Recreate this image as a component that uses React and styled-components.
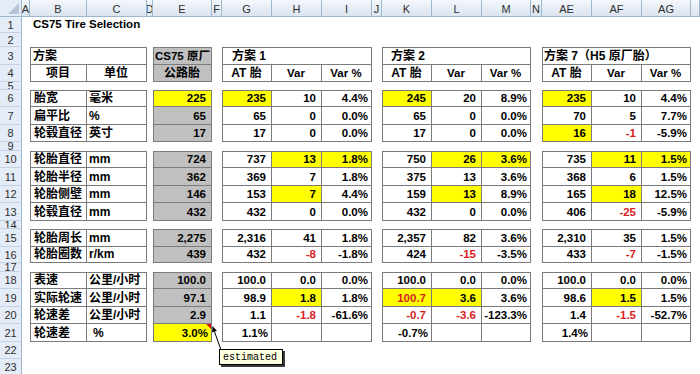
import React from "react";
import styled, { createGlobalStyle, css } from "styled-components";

const GlobalStyle = createGlobalStyle`
  html, body {
    margin: 0;
    padding: 0;
    background: #fff;
    overflow: hidden;
  }
  body {
    font-family: "Liberation Sans", "Noto Sans CJK SC", sans-serif;
  }
`;

// column widths: row header, A .. AG
const COLS = [22, 8, 57, 60, 6, 59, 10, 50, 50, 50, 10, 50, 50, 49, 11, 50, 50, 49];
const LETTERS = ["A", "B", "C", "D", "E", "F", "G", "H", "I", "J", "K", "L", "M", "N", "AE", "AF", "AG", ""];
// sheet rows 1..23
const HEIGHTS = [16, 14, 18, 17, 8, 17, 18, 17, 9, 17, 18, 17, 18, 8, 18, 16, 9, 17, 18, 17, 18, 17, 17];

const LINE = "1px solid #7b7b7b";
const GRAY = "#c0c0c0";
const YELLOW = "#ffff00";

const Sheet = styled.div`
  position: relative;
  display: grid;
  grid-template-columns: ${COLS.map((w) => w + "px").join(" ")} 1fr;
  grid-template-rows: 17px ${HEIGHTS.map((h) => h + "px").join(" ")};
  width: 700px;
  height: 374px;
  overflow: hidden;
`;

const Corner = styled.div`
  grid-row: 1;
  grid-column: 1;
  position: relative;
  background: #e4ecf7;
  border-right: 1px solid #9eb6ce;
  border-bottom: 1px solid #9eb6ce;

  &::after {
    content: "";
    position: absolute;
    right: 2px;
    bottom: 2px;
    border-bottom: 11px solid #b4c4d8;
    border-left: 11px solid transparent;
  }
`;

const ColHead = styled.div`
  grid-row: 1;
  grid-column: ${(p) => p.$col};
  box-sizing: border-box;
  padding-top: 2px;
  background: linear-gradient(#f4f7fb, #dbe4f0);
  border-right: 1px solid #9eb6ce;
  border-bottom: 1px solid #9eb6ce;
  display: flex;
  align-items: center;
  justify-content: center;
  font-size: 11px;
  color: #2e2e2e;
  overflow: hidden;
  white-space: nowrap;
`;

const RowHead = styled.div`
  grid-column: 1;
  grid-row: ${(p) => p.$row};
  box-sizing: border-box;
  background: #e4ecf7;
  border-right: 1px solid #9eb6ce;
  border-bottom: 1px solid #c3d2e4;
  display: flex;
  align-items: center;
  justify-content: center;
  font-size: 11px;
  color: #2e2e2e;
  overflow: hidden;
`;

const Title = styled.div`
  grid-row: 2;
  grid-column: 3 / span 4;
  display: flex;
  align-items: flex-end;
  padding: 0 0 2px 3px;
  font-size: 11.5px;
  font-weight: 700;
  line-height: 14px;
  white-space: nowrap;
`;

const Cell = styled.div`
  grid-row: ${(p) => p.$row};
  grid-column: ${(p) => p.$col} / span ${(p) => p.$span || 1};
  position: relative;
  box-sizing: border-box;
  display: flex;
  align-items: flex-end;
  justify-content: ${(p) =>
    p.$align === "left" ? "flex-start" : p.$align === "center" ? "center" : "flex-end"};
  padding: 0 ${(p) => p.$pr ?? 3}px 1px ${(p) => p.$pl ?? 2}px;
  border-right: ${LINE};
  border-bottom: ${LINE};
  border-top: ${(p) => (p.$top ? LINE : "none")};
  border-left: ${(p) => (p.$left ? LINE : "none")};
  background: ${(p) => p.$bg || "transparent"};
  color: ${(p) => (p.$red ? "#d81e1e" : "#000")};
  font-size: ${(p) => (p.$zh ? 12 : 11.5)}px;
  font-weight: 700;
  line-height: 14px;
  white-space: nowrap;
  overflow: hidden;

  ${(p) =>
    p.$note &&
    css`
      &::after {
        content: "";
        position: absolute;
        top: 0;
        right: 0;
        border-top: 5px solid #e01010;
        border-left: 5px solid transparent;
      }
    `}
`;

const NoteArrow = styled.svg`
  position: absolute;
  left: 205px;
  top: 320px;
  width: 25px;
  height: 35px;
  overflow: visible;
`;

const NoteBox = styled.div`
  position: absolute;
  left: 219px;
  top: 349px;
  width: 64px;
  height: 16px;
  box-sizing: border-box;
  padding-left: 3px;
  background: #ffffe1;
  border: 1px solid #000;
  box-shadow: 2px 2px 0 #3c3c3c;
  display: flex;
  align-items: center;
  font-family: "Liberation Mono", monospace;
  font-size: 10px;
  color: #000;
`;

const R = (r) => r + 1; // sheet row -> grid row
const COL = { B: 3, C: 4, E: 6, G: 8, K: 12, AE: 16 };

const SCHEMES = [
  { col: COL.G, title: "方案 1", indent: 9 },
  { col: COL.K, title: "方案 2", indent: 8 },
  { col: COL.AE, title: "方案 7（H5 原厂胎）", indent: 1 },
];

const ROWS = [
  { r: 6, top: true, label: "胎宽", unit: "毫米", base: "225|y", s: [["235|y", "10", "4.4%"], ["245|y", "20", "8.9%"], ["235|y", "10", "4.4%"]] },
  { r: 7, label: "扁平比", unit: "%", base: "65", s: [["65", "0", "0.0%"], ["65", "0", "0.0%"], ["70", "5", "7.7%"]] },
  { r: 8, label: "轮毂直径", unit: "英寸", base: "17", s: [["17", "0", "0.0%"], ["17", "0", "0.0%"], ["16|y", "-1|r", "-5.9%"]] },
  { r: 10, top: true, label: "轮胎直径", unit: "mm", base: "724", s: [["737", "13|y", "1.8%|y"], ["750", "26|y", "3.6%|y"], ["735", "11|y", "1.5%|y"]] },
  { r: 11, label: "轮胎半径", unit: "mm", base: "362", s: [["369", "7", "1.8%"], ["375", "13", "3.6%"], ["368", "6", "1.5%"]] },
  { r: 12, label: "轮胎侧壁", unit: "mm", base: "146", s: [["153", "7|y", "4.4%"], ["159", "13|y", "8.9%"], ["165", "18|y", "12.5%"]] },
  { r: 13, label: "轮毂直径", unit: "mm", base: "432", s: [["432", "0", "0.0%"], ["432", "0", "0.0%"], ["406", "-25|r", "-5.9%"]] },
  { r: 15, top: true, label: "轮胎周长", unit: "mm", base: "2,275", s: [["2,316", "41", "1.8%"], ["2,357", "82", "3.6%"], ["2,310", "35", "1.5%"]] },
  { r: 16, label: "轮胎圈数", unit: "r/km", base: "439", s: [["432", "-8|r", "-1.8%"], ["424", "-15|r", "-3.5%"], ["433", "-7|r", "-1.5%"]] },
  { r: 18, top: true, label: "表速", unit: "公里/小时", base: "100.0", s: [["100.0", "0.0", "0.0%"], ["100.0", "0.0", "0.0%"], ["100.0", "0.0", "0.0%"]] },
  { r: 19, label: "实际轮速", unit: "公里/小时", base: "97.1", s: [["98.9", "1.8|y", "1.8%"], ["100.7|yr", "3.6|y", "3.6%"], ["98.6", "1.5|y", "1.5%"]] },
  { r: 20, label: "轮速差", unit: "公里/小时", base: "2.9", s: [["1.1", "-1.8|r", "-61.6%"], ["-0.7|r", "-3.6|r", "-123.3%"], ["1.4", "-1.5|r", "-52.7%"]] },
  { r: 21, label: "轮速差", unit: "%", unitIndent: 6, base: "3.0%|y", note: true, s: [["1.1%", "", ""], ["-0.7%", "", ""], ["1.4%", "", ""]] },
];

const parse = (s) => {
  const [v, f = ""] = s.split("|");
  return { v, y: f.includes("y"), r: f.includes("r") };
};

const Num = ({ value, row, col, left, top, fill, note }) => {
  const { v, y, r } = parse(value);
  return (
    <Cell
      $row={row}
      $col={col}
      $left={left}
      $top={top}
      $bg={y ? YELLOW : fill}
      $red={r}
      $note={note}
      $pr={v.endsWith("%") ? 3 : 5}
    >
      {v}
    </Cell>
  );
};

export default function App() {
  return (
    <>
      <GlobalStyle />
      <Sheet>
        <Corner />
        {LETTERS.map((l, i) => (
          <ColHead key={i} $col={i + 2}>{l}</ColHead>
        ))}
        {HEIGHTS.map((h, i) => (
          <RowHead key={i} $row={i + 2}>{i + 1}</RowHead>
        ))}

        <Title>CS75 Tire Selection</Title>

        {/* header rows 3-4 */}
        <Cell $row={R(3)} $col={COL.B} $span={2} $align="left" $top $left $zh>方案</Cell>
        <Cell $row={R(4)} $col={COL.B} $align="center" $left $zh>项目</Cell>
        <Cell $row={R(4)} $col={COL.C} $align="center" $zh>单位</Cell>
        <Cell $row={R(3)} $col={COL.E} $align="left" $pl={1} $top $left $bg={GRAY}>CS75 原厂</Cell>
        <Cell $row={R(4)} $col={COL.E} $align="center" $left $bg={GRAY} $zh>公路胎</Cell>
        {SCHEMES.map((sc) => (
          <React.Fragment key={sc.col}>
            <Cell $row={R(3)} $col={sc.col} $span={3} $align="left" $pl={sc.indent} $top $left $zh>
              {sc.title}
            </Cell>
            <Cell $row={R(4)} $col={sc.col} $align="center" $left $zh>AT 胎</Cell>
            <Cell $row={R(4)} $col={sc.col + 1} $align="center">Var</Cell>
            <Cell $row={R(4)} $col={sc.col + 2} $align="center">Var %</Cell>
          </React.Fragment>
        ))}

        {/* data rows */}
        {ROWS.map((row) => (
          <React.Fragment key={row.r}>
            <Cell $row={R(row.r)} $col={COL.B} $align="left" $pl={3} $left $top={row.top} $zh>
              {row.label}
            </Cell>
            <Cell $row={R(row.r)} $col={COL.C} $align="left" $pl={row.unitIndent || 2} $top={row.top} $zh>
              {row.unit}
            </Cell>
            <Num value={row.base} row={R(row.r)} col={COL.E} left top={row.top} fill={GRAY} note={row.note} />
            {SCHEMES.map((sc, k) =>
              row.s[k].map((val, j) => (
                <Num
                  key={sc.col + j}
                  value={val}
                  row={R(row.r)}
                  col={sc.col + j}
                  left={j === 0}
                  top={row.top}
                />
              ))
            )}
          </React.Fragment>
        ))}

        <NoteArrow viewBox="0 0 25 35">
          <line x1="9.5" y1="11.6" x2="16" y2="30" stroke="#000" strokeWidth="1" />
          <polygon points="7.5,6 11.85,10.8 7.15,12.4" fill="#000" />
        </NoteArrow>
        <NoteBox>estimated</NoteBox>
      </Sheet>
    </>
  );
}
